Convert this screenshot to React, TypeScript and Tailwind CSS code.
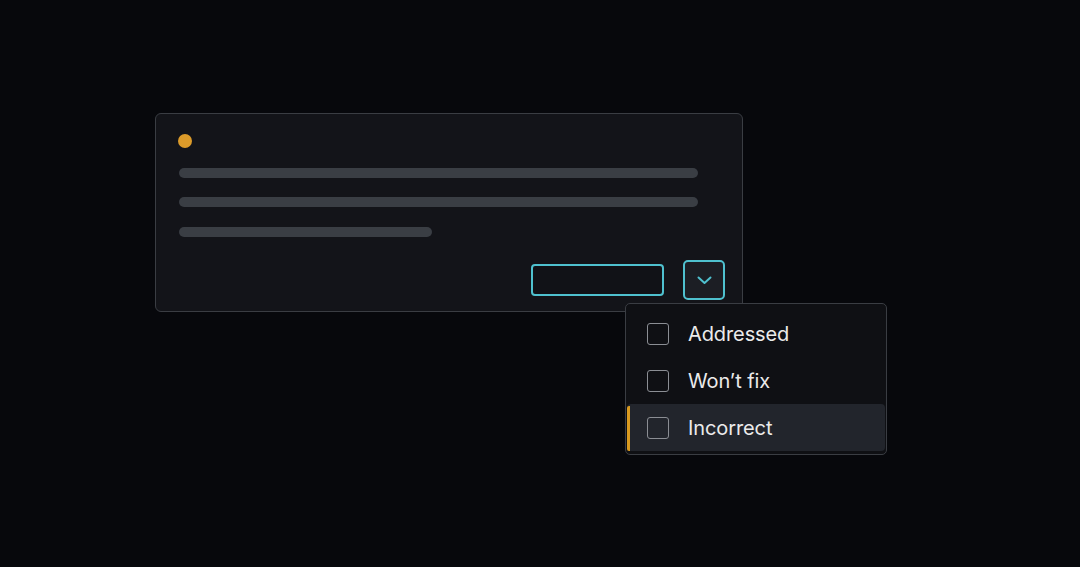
import React from "react";

function Check() {
  return <div className="w-[22px] h-[22px] rounded-[3px] border-[1.5px] border-[#8b8e94] shrink-0" />;
}

function Item({ label, active }: { label: string; active?: boolean }) {
  return (
    <div
      className={
        "relative h-[47px] flex items-center pl-[20px] gap-[19px] rounded-[4px] " +
        (active ? "bg-[#22252c]" : "")
      }
    >
      {active && <div className="absolute left-0 top-[2px] bottom-0 w-[3px] bg-[#d99a1f] rounded-l-[2px]" />}
      <Check />
      <span className="text-[20px] leading-none text-[#ebebeb] tracking-[-0.1px] -translate-y-[0.5px]">{label}</span>
    </div>
  );
}

export default function App() {
  return (
    <div
      className="relative w-[1080px] h-[567px] bg-[#07080c] overflow-hidden pt-[113px] pl-[155px]"
      style={{ fontFamily: "Inter, 'Noto Sans', sans-serif" }}
    >
      <div className="w-[588px] h-[199px] rounded-[6px] border border-[#3a3d43] bg-[#131419] pl-[22px] pr-[17px] pt-[20px] pb-[11px] flex flex-col">
        <div className="w-[14px] h-[14px] rounded-full bg-[#dc9b2a]" />
        <div className="mt-[20px] ml-[1px] w-[519px] h-[10px] rounded-full bg-[#3a3e44]" />
        <div className="mt-[19px] ml-[1px] w-[519px] h-[10px] rounded-full bg-[#3a3e44]" />
        <div className="mt-[20px] ml-[1px] w-[253px] h-[10px] rounded-full bg-[#3a3e44]" />
        <div className="mt-[23px] flex items-center justify-end gap-[19px]">
          <div className="w-[133px] h-[32px] rounded-[4px] border-2 border-[#4fc1cf] bg-[#111217]" />
          <div className="w-[42px] h-[40px] rounded-[5px] border-2 border-[#4fc1cf] bg-[#1c1e24] flex items-center justify-center">
            <svg width="15" height="9" viewBox="0 0 15 9" fill="none">
              <polyline points="1.5,1.5 7.5,7 13.5,1.5" stroke="#4fc1cf" strokeWidth="2" strokeLinecap="round" strokeLinejoin="round" />
            </svg>
          </div>
        </div>
      </div>

      <div className="absolute left-[625px] top-[303px] w-[262px] h-[152px] rounded-[5px] border border-[#3a3d43] bg-[#0f1014] pt-[6px] pb-[2px] px-[1px] flex flex-col">
        <Item label="Addressed" />
        <Item label="Won’t fix" />
        <Item label="Incorrect" active />
      </div>
    </div>
  );
}
